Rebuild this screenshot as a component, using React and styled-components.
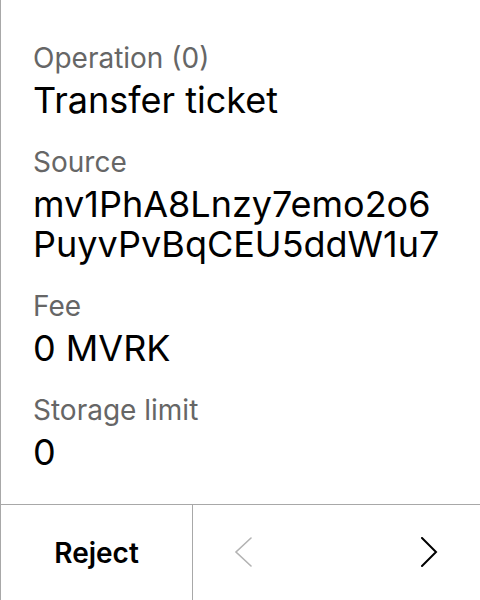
import React from 'react';
import styled, { createGlobalStyle } from 'styled-components';

const GlobalStyle = createGlobalStyle`
  html, body {
    margin: 0;
    padding: 0;
    background: #ffffff;
  }
  body {
    font-family: Inter, "Noto Sans", "Liberation Sans", sans-serif;
    color: #000000;
  }
`;

const fields = [
  { label: 'Operation (0)', value: 'Transfer ticket' },
  { label: 'Source', value: 'mv1PhA8Lnzy7emo2o6PuyvPvBqCEU5ddW1u7', breakAll: true },
  { label: 'Fee', value: '0 MVRK' },
  { label: 'Storage limit', value: '0' },
];

function Chevron({ dir, disabled }) {
  const d = dir === 'left' ? 'M17 1 L2 15 L17 29' : 'M2 1 L16 15 L2 29';
  return (
    <svg width="19" height="31" viewBox="0 0 19 31" fill="none">
      <path
        d={d}
        stroke={disabled ? '#b3b3b3' : '#000000'}
        strokeWidth={disabled ? 1.6 : 2}
        strokeLinecap="round"
        strokeLinejoin="miter"
      />
    </svg>
  );
}

export default function App() {
  return (
    <>
      <GlobalStyle />
      <Screen>
        <Details>
          {fields.map(f => (
            <Field key={f.label}>
              <Label>{f.label}</Label>
              <Value breakAll={f.breakAll}>{f.value}</Value>
            </Field>
          ))}
        </Details>
        <Footer>
          <RejectButton>Reject</RejectButton>
          <Pager>
            <NavButton><Chevron dir="left" disabled /></NavButton>
            <NavButton><Chevron dir="right" /></NavButton>
          </Pager>
        </Footer>
      </Screen>
    </>
  );
}

const Screen = styled.div`
  width: 480px;
  height: 600px;
  box-sizing: border-box;
  border-left: 1px solid #a8a8a8;
  display: flex;
  flex-direction: column;
`;

const Details = styled.div`
  flex: 1;
  min-height: 0;
  overflow: hidden;
  padding: 42px 32px 0 32px;
  display: flex;
  flex-direction: column;
`;

const Field = styled.div`
  display: flex;
  flex-direction: column;
  margin-bottom: 26px;
`;

const Label = styled.div`
  font-size: 28px;
  line-height: 32px;
  color: #666666;
  margin-bottom: 6px;
`;

const Value = styled.div`
  font-size: 36px;
  line-height: 40px;
  color: #000000;
  word-break: ${props => props.breakAll ? 'break-all' : 'normal'};
`;

const Footer = styled.div`
  height: 96px;
  flex-shrink: 0;
  display: flex;
  border-top: 1px solid #a8a8a8;
  box-sizing: border-box;
`;

const RejectButton = styled.div`
  width: 191px;
  border-right: 1px solid #a8a8a8;
  display: flex;
  align-items: center;
  justify-content: center;
  font-size: 28px;
  font-weight: 600;
  color: #000000;
`;

const Pager = styled.div`
  flex: 1;
  display: flex;
  align-items: center;
  justify-content: space-between;
  padding: 0 41px 0 41px;
`;

const NavButton = styled.div`
  display: flex;
  align-items: center;
`;
